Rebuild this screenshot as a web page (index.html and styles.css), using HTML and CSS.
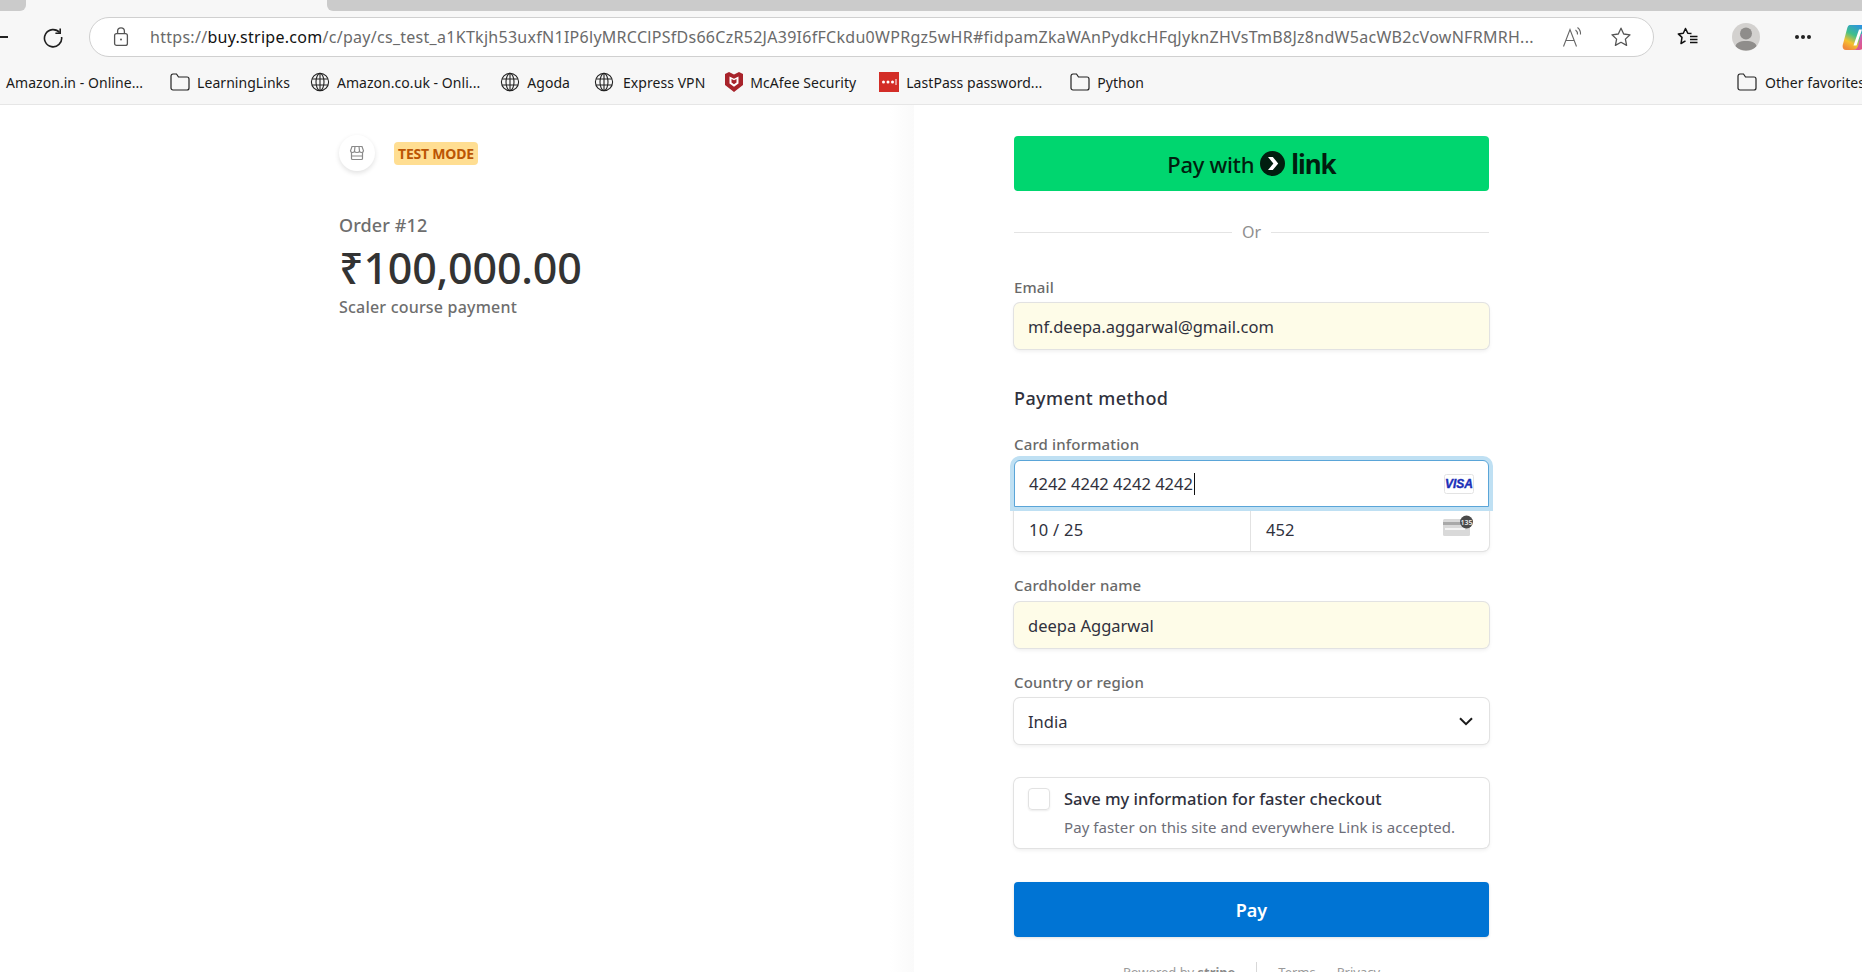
FILE: index.html
```html
<!DOCTYPE html>
<html lang="en">
<head>
    <meta charset="UTF-8">
    <title>Stripe Checkout</title>
    <link rel="stylesheet" href="styles.css">
</head>
<body>
    <div class="browser">
        <div class="tabstrip">
            <div class="tab-left"></div>
            <div class="tab-right"></div>
        </div>
        <div class="toolbar">
            <div class="back-tail"></div>
            <svg class="reload" width="22" height="22" viewBox="0 0 22 22" fill="none" stroke="#1f1f1f" stroke-width="1.6"><path d="M17.6 6.6A8.6 8.6 0 1 0 19.6 11"/><path d="M18.2 2.4v4.8h-4.8"/></svg>
            <div class="addressbar">
                <svg class="lock" width="16" height="20" viewBox="0 0 16 20" fill="none" stroke="#555" stroke-width="1.3"><rect x="1.6" y="6.6" width="12.8" height="11.8" rx="2"/><path d="M4.6 6.6V4.2a3.4 3.4 0 0 1 6.8 0v2.4"/><circle cx="8" cy="12.5" r="1" fill="#555" stroke="none"/></svg>
                <div class="url"><span class="url-dim">https://</span><span class="url-host">buy.stripe.com</span><span class="url-dim">/c/pay/cs_test_a1KTkjh53uxfN1IP6lyMRCClPSfDs66CzR52JA39I6fFCkdu0WPRgz5wHR#fidpamZkaWAnPydkcHFqJyknZHVsTmB8Jz8ndW5acWB2cVowNFRMRH...</span></div>
                <svg class="read-aloud" width="24" height="22" viewBox="0 0 24 22" fill="none" stroke="#666" stroke-width="1.1"><path d="M1.500 20.500 8 3.500l6.500 17M3.900 14.500h8.200"/><path d="M13.500 4a5 5 0 0 1 2 4.500M15.500 1.500a8 8 0 0 1 3 7"/></svg>
                <svg class="star" width="22" height="22" viewBox="0 0 22 22" fill="none" stroke="#555" stroke-width="1.3" stroke-linejoin="round"><path d="M11 2.200l2.700 5.800 6.300.8-4.600 4.300 1.200 6.300-5.600-3.100-5.600 3.100 1.200-6.300L2 8.800l6.300-.8z"/></svg>
            </div>
            <svg class="favorites" width="24" height="22" viewBox="0 0 24 22" fill="none" stroke="#111" stroke-width="1.5" stroke-linejoin="round"><path d="M15.500 7.600l-3.700-.3L9.500 2.500 7.300 7.300l-5 .6 3.700 3.500-1 6.100 4.500-2.600"/><path d="M14 10.500h7.500M14 13.500h7.500M14 16.500h7.500"/></svg>
            <div class="avatar">
                <svg width="28" height="28" viewBox="0 0 28 28"><circle cx="14" cy="10.500" r="6" fill="#8f8d8b"/><path d="M3.500 23.500c0-3.500 4.500-5.500 10.500-5.500s10.500 2 10.500 5.500c-2.500 2.800-6.500 4-10.500 4s-8-1.200-10.500-4z" fill="#8f8d8b"/></svg>
            </div>
            <div class="dots"><i></i><i></i><i></i></div>
            <svg class="copilot" width="27" height="27" viewBox="0 0 27 27">
                <defs>
                    <linearGradient id="cop" x1="0.8" y1="0" x2="0.3" y2="1"><stop offset="0" stop-color="#2a8fe8"/><stop offset=".45" stop-color="#3fc08a"/><stop offset=".75" stop-color="#f5c12e"/><stop offset="1" stop-color="#f08a3c"/></linearGradient>
                    <linearGradient id="cop2" x1="0" y1="0" x2="1" y2="1"><stop offset="0" stop-color="#b56ce0"/><stop offset="1" stop-color="#ef4f6c"/></linearGradient>
                </defs>
                <path d="M8 1h13c3 0 4 2 3 5l-6 15c-1.500 3.500-3 5-6 5H4c-3 0-4-3-3-6L5 5c.7-2.500 1.500-4 3-4z" fill="url(#cop)"/>
                <path d="M19 10h6l-3 12c-.8 3-2.500 4-5 4h-7c3 0 5-1 6-4z" fill="url(#cop2)"/>
                <path d="M17 5.500h3l-5.500 16h-3z" fill="#fff"/>
            </svg>
        </div>
        <div class="bookmarks">
            <span class="bm bm-first">Amazon.in - Online...</span>
            <span class="bm">
                <svg width="20" height="18" viewBox="0 0 20 18" fill="none" stroke="#222" stroke-width="1.2"><path d="M1 4V3.200C1 2 1.800 1 3 1h3.500l2 3H17c1.200 0 2 .8 2 2v9c0 1.200-.8 2-2 2H3c-1.200 0-2-.8-2-2z"/></svg>LearningLinks</span>
            <span class="bm">
                <svg width="20" height="20" viewBox="0 0 20 20" fill="none" stroke="#222" stroke-width="1.1"><circle cx="10" cy="10" r="8.600"/><ellipse cx="10" cy="10" rx="4" ry="8.600"/><path d="M2 7h16M2 13h16M10 1.400v17.200"/></svg>Amazon.co.uk - Onli...</span>
            <span class="bm bm-agoda">
                <svg width="20" height="20" viewBox="0 0 20 20" fill="none" stroke="#222" stroke-width="1.1"><circle cx="10" cy="10" r="8.600"/><ellipse cx="10" cy="10" rx="4" ry="8.600"/><path d="M2 7h16M2 13h16M10 1.400v17.200"/></svg>Agoda</span>
            <span class="bm bm-express">
                <svg width="20" height="20" viewBox="0 0 20 20" fill="none" stroke="#222" stroke-width="1.1"><circle cx="10" cy="10" r="8.600"/><ellipse cx="10" cy="10" rx="4" ry="8.600"/><path d="M2 7h16M2 13h16M10 1.400v17.200"/></svg>Express VPN</span>
            <span class="bm bm-mcafee">
                <svg width="18" height="20" viewBox="0 0 18 20"><path d="M0 2 4 0l5 2.500L14 0l4 2v11l-9 7-9-7z" fill="#a8232b"/><path d="M4.500 4.500 9 6.800l4.500-2.300v7L9 14.800 4.500 11.500z" fill="#fff"/><path d="M6.500 7 9 8.300 11.500 7v3.500L9 12.300l-2.500-1.800z" fill="#a8232b"/></svg>McAfee Security</span>
            <span class="bm bm-lastpass">
                <svg width="20" height="20" viewBox="0 0 20 20"><rect width="20" height="20" fill="#d32d27"/><circle cx="4.500" cy="10" r="1.500" fill="#fff"/><circle cx="9" cy="10" r="1.500" fill="#fff"/><circle cx="13.500" cy="10" r="1.500" fill="#fff"/><rect x="16.500" y="7" width="1" height="6" fill="#fff"/></svg>LastPass password...</span>
            <span class="bm">
                <svg width="20" height="18" viewBox="0 0 20 18" fill="none" stroke="#222" stroke-width="1.2"><path d="M1 4V3.200C1 2 1.800 1 3 1h3.500l2 3H17c1.200 0 2 .8 2 2v9c0 1.200-.8 2-2 2H3c-1.200 0-2-.8-2-2z"/></svg>Python</span>
            <div class="bm-sep"></div>
            <span class="bm bm-other">
                <svg width="20" height="18" viewBox="0 0 20 18" fill="none" stroke="#222" stroke-width="1.2"><path d="M1 4V3.200C1 2 1.800 1 3 1h3.500l2 3H17c1.200 0 2 .8 2 2v9c0 1.200-.8 2-2 2H3c-1.200 0-2-.8-2-2z"/></svg>Other favorites</span>
        </div>
    </div>

    <div class="checkout">
        <section class="summary">
            <div class="merchant">
                <div class="store-icon">
                    <svg width="16" height="16" viewBox="0 0 16 16" fill="none" stroke="#8a8a8a" stroke-width="1.2"><path d="M3 1.500h10l1.500 4.300c0 1.200-1 1.700-1.900 1.700s-1.700-.5-2.100-1.300c-.4.800-1.400 1.300-2.500 1.300s-2.100-.5-2.500-1.300C5.100 7 4.300 7.500 3.400 7.500S1.500 7 1.500 5.800zM2.500 7.500v6c0 .6.400 1 1 1h9c.6 0 1-.4 1-1v-6M2.500 11h11M6 1.500 5.500 6M10 1.500 10.500 6"/></svg>
                </div>
                <span class="test-badge">TEST MODE</span>
            </div>
            <div class="order-name">Order #12</div>
            <div class="order-amount">₹100,000.00</div>
            <div class="order-desc">Scaler course payment</div>
        </section>

        <section class="pay-pane">
            <div class="pay-form">
                <button class="link-btn">
                    <span>Pay with</span>
                    <svg class="link-mark" width="25" height="25" viewBox="0 0 25 25"><circle cx="12.500" cy="12.500" r="12.500" fill="#011e0f"/><path d="M8 6h4.800l5.400 6.500-5.400 6.500H8l5.400-6.500z" fill="#fff"/></svg>
                    <span class="link-word">link</span>
                </button>

                <div class="or-row"><span>Or</span></div>

                <label class="field-label">Email</label>
                <div class="input autofill">mf.deepa.aggarwal@gmail.com</div>

                <h2 class="section-title">Payment method</h2>

                <label class="field-label">Card information</label>
                <div class="card-group">
                    <div class="card-number">
                        <span>4242 4242 4242 4242</span><span class="caret"></span>
                        <svg class="visa" width="30" height="20" viewBox="0 0 30 20"><rect x=".5" y=".5" width="29" height="19" rx="2" fill="#fff" stroke="#e3e3e3"/><text class="visa-text" x="15" y="14" text-anchor="middle">VISA</text></svg>
                    </div>
                    <div class="card-row">
                        <div class="card-cell card-exp">10 / 25</div>
                        <div class="card-cell card-cvc">452
                            <svg class="cvc" width="32" height="22" viewBox="0 0 32 22"><rect x="1" y="4" width="27" height="17" rx="1.500" fill="#d9d9d9"/><rect x="1" y="7" width="27" height="3" fill="#a9a9a9"/><rect x="3" y="13" width="20" height="2" fill="#f4f4f4"/><circle cx="24.500" cy="7" r="6.500" fill="#4a4a4a"/><text class="cvc-text" x="24.500" y="9.500" text-anchor="middle">135</text></svg>
                        </div>
                    </div>
                </div>

                <label class="field-label label-name">Cardholder name</label>
                <div class="input autofill">deepa Aggarwal</div>

                <label class="field-label label-country">Country or region</label>
                <div class="input select">India
                    <svg width="14" height="9" viewBox="0 0 14 9" fill="none" stroke="#1a1a1a" stroke-width="2"><path d="M1 1.200l6 6 6-6"/></svg>
                </div>

                <div class="save-box">
                    <span class="checkbox"></span>
                    <div>
                        <div class="save-title">Save my information for faster checkout</div>
                        <div class="save-sub">Pay faster on this site and everywhere Link is accepted.</div>
                    </div>
                </div>

                <button class="pay-btn">Pay</button>

                <div class="powered">
                    <span>Powered by <b>stripe</b></span>
                    <span class="powered-sep"></span>
                    <span>Terms</span>
                    <span>Privacy</span>
                </div>
            </div>
        </section>
    </div>
</body>
</html>
```

FILE: styles.css
```css
html, body {
    margin: 0;
    height: 972px;
    overflow: hidden;
}
body {
    font-family: "Noto Sans", "Open Sans", sans-serif;
    background-color: white;
    color: #30313d;
    width: 1862px;
}

/* browser chrome */
.browser {
    height: 104px;
    background-color: #f7f7f7;
    border-bottom: 1px solid #e6e6e6;
}
.tabstrip {
    height: 11px;
    display: flex;
    justify-content: space-between;
}
.tab-left {
    width: 26px;
    background-color: #cbcbcb;
    border-bottom-right-radius: 6px;
}
.tab-right {
    width: 1535px;
    background-color: #cbcbcb;
    border-bottom-left-radius: 6px;
}
.toolbar {
    height: 52px;
    display: flex;
    align-items: center;
}
.toolbar > * {
    flex-shrink: 0;
}
.back-tail {
    width: 8px;
    height: 2px;
    background-color: #222;
}
.reload {
    margin-left: 34px;
}
.addressbar {
    margin-left: 25px;
    width: 1563px;
    height: 38px;
    background-color: white;
    border: 1px solid #d0d0d0;
    border-radius: 20px;
    display: flex;
    align-items: center;
}
.lock {
    margin-left: 23px;
}
.url {
    margin-left: 21px;
    width: 1395px;
    white-space: nowrap;
    overflow: hidden;
    font-size: 16px;
    letter-spacing: 0.28px;
    color: #6a6a6a;
}
.url-host {
    color: #111;
}
.read-aloud {
    margin-left: 17px;
}
.star {
    margin-left: 24px;
}
.favorites {
    margin-left: 22px;
}
.avatar {
    margin-left: 32px;
    width: 28px;
    height: 28px;
    border-radius: 50%;
    background-color: #d3d1cf;
    overflow: hidden;
}
.dots {
    margin-left: 35px;
    display: flex;
    gap: 2px;
}
.dots i {
    width: 4px;
    height: 4px;
    border-radius: 50%;
    background-color: #222;
}
.copilot {
    margin-left: 31px;
}
.bookmarks {
    height: 41px;
    box-sizing: border-box;
    padding: 0 0 3px 6px;
    display: flex;
    align-items: center;
    font-size: 14px;
    color: #1a1a1a;
    white-space: nowrap;
    letter-spacing: 0.05px;
}
.bm {
    display: flex;
    align-items: center;
    gap: 7px;
    margin-right: 20px;
}
.bm-first {
    margin-right: 27px;
}
.bm-agoda {
    margin-right: 24px;
}
.bm-express {
    gap: 9px;
}
.bm-mcafee {
    margin-right: 23px;
}
.bm-lastpass {
    margin-right: 28px;
}
.bm-sep {
    width: 1px;
    height: 22px;
    background-color: #d0d0d0;
    margin-left: 555px;
    margin-right: 18px;
}
.bm-other {
    gap: 8px;
    margin-right: 0;
}

/* checkout */
.checkout {
    display: flex;
    height: 867px;
}
.summary {
    width: 914px;
    box-sizing: border-box;
    padding: 30px 0 0 339px;
    background: linear-gradient(to right, white 890px, #fafafa 914px);
}
.merchant {
    display: flex;
    align-items: center;
    gap: 19px;
}
.store-icon {
    width: 36px;
    height: 36px;
    border-radius: 50%;
    background-color: white;
    box-shadow: 0 2px 5px rgba(0, 0, 0, 0.12);
    display: flex;
    align-items: center;
    justify-content: center;
}
.test-badge {
    background-color: #ffde92;
    color: #bb5504;
    font-size: 14px;
    font-weight: 700;
    line-height: 23px;
    padding: 0 4px;
    border-radius: 4px;
    letter-spacing: -0.2px;
}
.order-name {
    margin-top: 40px;
    font-size: 18px;
    font-weight: 500;
    line-height: 28px;
    color: #6e6e6e;
    letter-spacing: 0.1px;
}
.order-amount {
    font-size: 43px;
    font-weight: 500;
    line-height: 57px;
    color: #333;
    letter-spacing: -0.2px;
}
.order-desc {
    font-size: 16px;
    font-weight: 500;
    line-height: 22px;
    color: #6e6e6e;
    letter-spacing: 0.2px;
}
.pay-pane {
    flex: 1;
    padding: 31px 0 0 100px;
}
.pay-form {
    width: 475px;
}
.link-btn, .pay-btn {
    display: flex;
    align-items: center;
    justify-content: center;
    width: 100%;
    height: 55px;
    border: none;
    border-radius: 4px;
    font-family: inherit;
}
.link-btn {
    background-color: #00d66f;
    color: #011e0f;
    font-size: 22px;
    font-weight: 500;
    letter-spacing: -0.3px;
    gap: 6px;
}
.link-word {
    font-size: 26px;
    font-weight: 700;
    letter-spacing: -1px;
    line-height: 30px;
}
.or-row {
    margin-top: 31px;
    height: 20px;
    display: flex;
    align-items: center;
    gap: 10px;
    font-size: 16px;
    color: #8f8f8f;
}
.or-row span {
    order: 1;
}
.or-row::before, .or-row::after {
    content: "";
    flex: 1;
    height: 1px;
    background-color: #e4e4e4;
}
.or-row::after {
    order: 2;
}
.field-label {
    display: block;
    font-size: 15px;
    font-weight: 500;
    line-height: 20px;
    color: #696969;
    margin-bottom: 6px;
    letter-spacing: 0.15px;
}
.or-row + .field-label {
    margin-top: 35px;
}
.input {
    height: 46px;
    box-sizing: border-box;
    display: flex;
    align-items: center;
    padding: 0 14px;
    font-size: 16.5px;
    border-radius: 6px;
    background-color: white;
    box-shadow: 0 0 0 1px #e2e2e2, 0 2px 4px rgba(0, 0, 0, 0.08);
}
.autofill {
    background-color: #fefce8;
}
.section-title {
    margin: 36px 0 23px;
    font-size: 18px;
    font-weight: 500;
    line-height: 26px;
    color: #30313d;
    letter-spacing: 0.4px;
}
.card-group {
    border-radius: 6px;
    box-shadow: 0 0 0 1px #e2e2e2, 0 2px 4px rgba(0, 0, 0, 0.08);
}
.card-number {
    height: 47px;
    box-sizing: border-box;
    display: flex;
    align-items: center;
    padding: 0 14px;
    font-size: 16.5px;
    background-color: white;
    border-radius: 6px 6px 0 0;
    border: 1px solid #5aa5d8;
    box-shadow: 0 0 0 4px #bfe0f3;
    position: relative;
}
.caret {
    width: 1px;
    height: 22px;
    background-color: #111;
    margin-left: 1px;
}
.visa {
    margin-left: auto;
}
.visa-text {
    font-family: "Liberation Sans", sans-serif;
    font-size: 12px;
    font-weight: 700;
    font-style: italic;
    fill: #1a2fb8;
    stroke: #1a2fb8;
    stroke-width: 0.4px;
}
.card-row {
    display: grid;
    grid-template-columns: 236px 1fr;
    height: 44px;
}
.card-cell {
    box-sizing: border-box;
    display: flex;
    align-items: center;
    padding: 0 15px;
    font-size: 16.5px;
}
.card-exp {
    letter-spacing: 0.3px;
}
.card-cvc {
    border-left: 1px solid #e2e2e2;
    justify-content: space-between;
}
.cvc {
    margin-top: -6px;
}
.cvc-text {
    font-size: 7px;
    font-weight: 600;
    fill: #eee;
}
.label-name {
    margin-top: 24px;
    margin-bottom: 7px;
}
.label-country {
    margin-top: 24px;
}
.select {
    justify-content: space-between;
    padding-right: 16px;
}
.save-box {
    margin-top: 34px;
    height: 70px;
    box-sizing: border-box;
    display: flex;
    gap: 14px;
    padding: 10px 14px;
    border-radius: 6px;
    box-shadow: 0 0 0 1px #e2e2e2, 0 2px 4px rgba(0, 0, 0, 0.08);
}
.checkbox {
    width: 22px;
    height: 22px;
    box-sizing: border-box;
    flex-shrink: 0;
    border-radius: 4px;
    border: 1px solid #e2e2e2;
    box-shadow: 0 1px 2px rgba(0, 0, 0, 0.08);
}
.save-title {
    font-size: 16.5px;
    font-weight: 500;
    line-height: 22px;
    color: #30313d;
}
.save-sub {
    margin-top: 7px;
    font-size: 15px;
    line-height: 20px;
    color: #6d6e78;
    letter-spacing: 0.08px;
}
.pay-btn {
    margin-top: 34px;
    padding-top: 2px;
    background-color: #0074d4;
    color: white;
    font-size: 18px;
    font-weight: 600;
    box-shadow: 0 1px 3px rgba(0, 0, 0, 0.12);
}
.powered {
    margin-top: 25px;
    display: flex;
    align-items: center;
    justify-content: center;
    gap: 21px;
    font-size: 13px;
    color: #9a9a9a;
}
.powered b {
    color: #8a8a8a;
}
.powered-sep {
    width: 1px;
    height: 20px;
    background-color: #d8d8d8;
}
```
